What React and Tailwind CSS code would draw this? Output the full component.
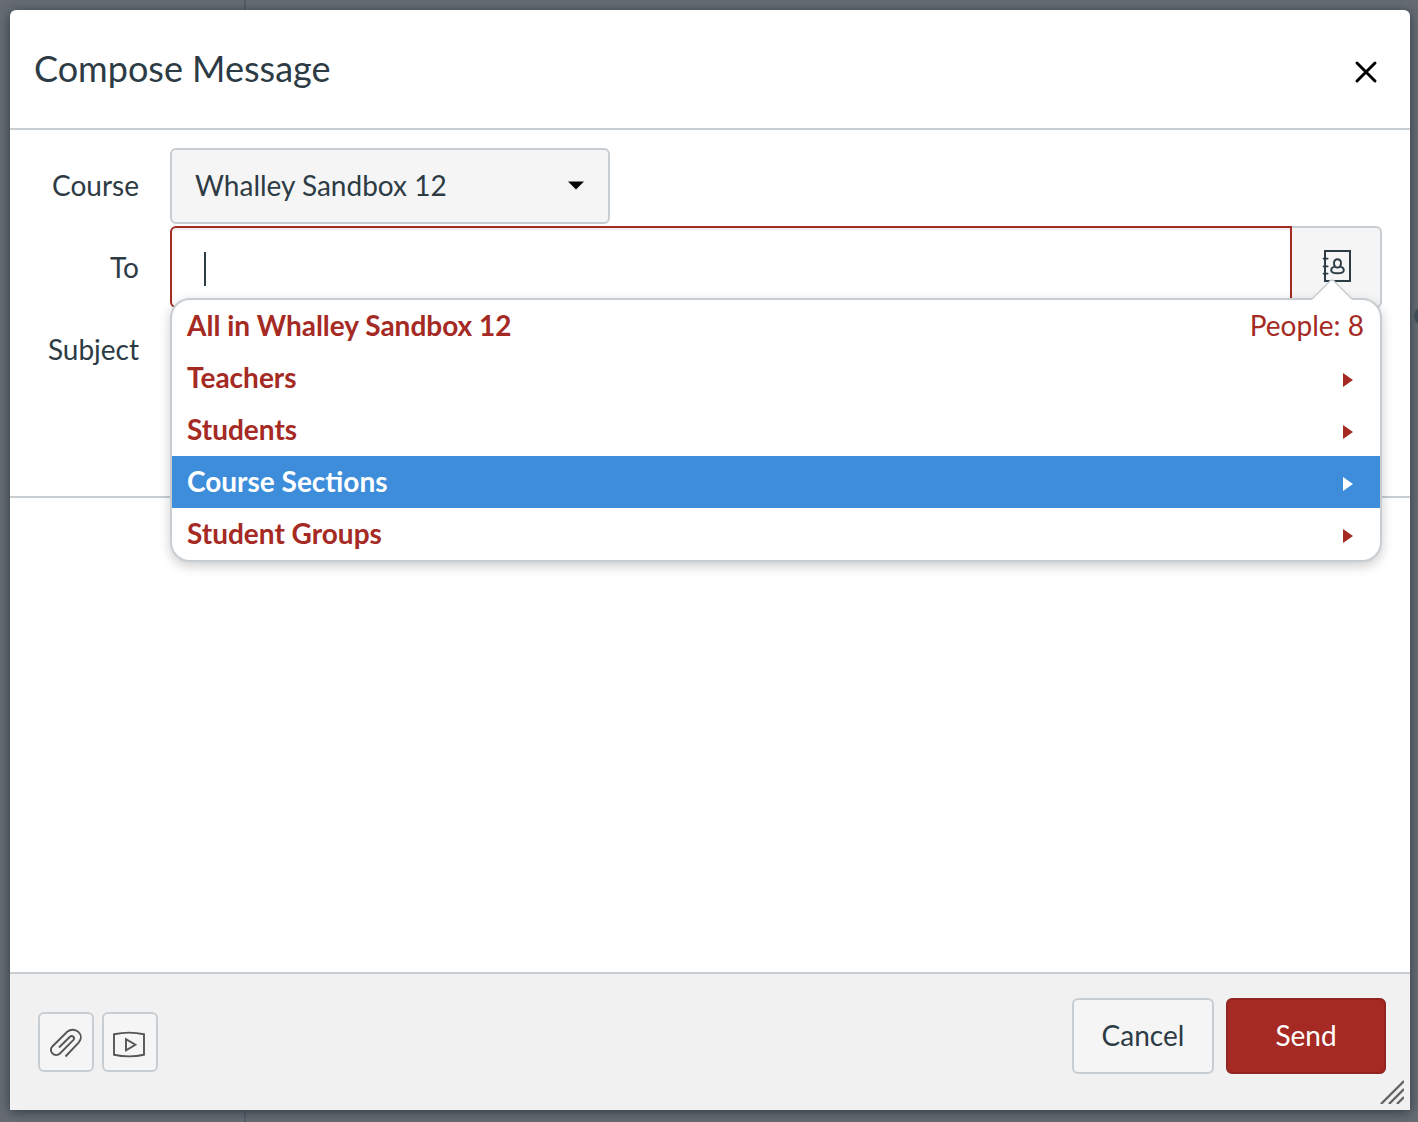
import React, { useState } from "react"

const recipients = [
  { name: "All in Whalley Sandbox 12", people: 8 },
  { name: "Teachers" },
  { name: "Students" },
  { name: "Course Sections" },
  { name: "Student Groups" },
]

const CloseIcon = () => (
  <svg width="24" height="24" viewBox="0 0 24 24" fill="none" stroke="currentColor" strokeWidth="3" strokeLinecap="round">
    <path d="M3 3L21 21M21 3L3 21" />
  </svg>
)

const AddressBookIcon = () => (
  <svg width="30" height="34" viewBox="0 0 30 34" fill="none" stroke="currentColor" strokeWidth="2">
    <path d="M4 2H29V32H4Z" />
    <path d="M2.6 9.6H6.6M2.6 17.4H6.6M2.6 24.6H6.6" strokeLinecap="round" strokeWidth="1.8" />
    <path d="M14.1 17.6C12.3 15.6 12.4 10.2 16.5 10.2S20.7 15.6 18.9 17.6C21.3 18 22.8 19.3 22.8 21.2C22.8 23.2 20.3 24.2 16.5 24.2S10.2 23.2 10.2 21.2C10.2 19.3 11.7 18 14.1 17.6C15.2 18.8 17.8 18.8 18.9 17.6" strokeWidth="1.9" />
  </svg>
)

const ClipIcon = () => (
  <svg width="34" height="32" viewBox="0 0 34 32" fill="none" stroke="currentColor" strokeWidth="1.9">
    <path d="M10 19.5L20.7 9C23.4 6.5 26.6 9.6 24.2 12.2L11.2 25.2C5.8 30.3 -1.4 23.4 3.6 18.2L18.2 3.8C25.6 -2.6 36.6 6.8 29.6 14.6L16.5 28.5" />
  </svg>
)

const MediaIcon = () => (
  <svg width="34" height="28" viewBox="0 0 34 28" fill="none" stroke="currentColor" strokeWidth="1.9">
    <path d="M1 4.2Q16 1 31 4.2V24.8Q16 28 1 24.8Z" />
    <path d="M13 9.1V20.3L22.4 14.7Z" />
  </svg>
)

const App = () => {
  const [to, setTo] = useState("")
  const [subject, setSubject] = useState("")
  const [body, setBody] = useState("")
  const [active, setActive] = useState(3)

  return (
    <div className="relative flex min-h-screen bg-[#666c72] pt-2.5 pr-2 pb-3 pl-2.5 font-['Lato',sans-serif] text-[28px] leading-9 text-[#2d3b45]">
      {/* Dimmed inbox behind the dialog */}
      <div className="absolute inset-0 flex overflow-hidden" aria-hidden="true">
        <div className="w-[246px] border-r-2 border-[#555e67]" />
        <div className="absolute top-[306px] -right-4 h-5 w-5 rounded-full bg-[#444f59]" />
      </div>

      <form
        role="dialog"
        aria-labelledby="compose-title"
        onSubmit={(e) => e.preventDefault()}
        className="relative flex flex-1 flex-col rounded-t-md bg-white shadow-[0_2px_12px_#2d3b45]"
      >
        {/* Header */}
        <header className="flex h-30 items-center justify-between border-b-2 border-[#c7cdd1] pr-8 pl-6">
          <h1 id="compose-title" className="pb-0.5 text-[36px] leading-10">Compose Message</h1>
          <button type="button" aria-label="Close" className="mt-1.5 text-black">
            <CloseIcon />
          </button>
        </header>

        {/* Message fields */}
        <div className="grid grid-cols-[129px_1fr] gap-x-[31px] border-b-2 border-[#c7cdd1] pt-[18px] pr-7 pb-[106px]">
          <label htmlFor="course" className="flex h-[78px] items-center justify-end pb-1">Course</label>
          <div className="relative h-[76px] w-[440px]">
            <select
              id="course"
              className="h-full w-full appearance-none rounded-md border-2 border-[#c7cdd1] bg-[#f5f5f5] pb-0.5 pl-[23px]"
            >
              <option>Whalley Sandbox 12</option>
            </select>
            <svg className="pointer-events-none absolute top-[33px] right-[26px]" width="16" height="9" viewBox="0 0 16 9">
              <path d="M0 0.5H16L8 8.5Z" fill="#000" />
            </svg>
          </div>

          <label htmlFor="to" className="flex h-[82px] items-center justify-end">To</label>
          <div className="relative flex h-[82px]">
            <div className="flex flex-1 items-center rounded-l-md border-2 border-[#a52a24] pt-1 pl-8 shadow-[inset_0_2px_2px_#ececec]">
              <span className="h-[34px] w-0.5 bg-[#2d3b45]" />
              <input
                id="to"
                value={to}
                onChange={(e) => setTo(e.target.value)}
                className="h-full w-full caret-transparent outline-none"
              />
            </div>
            <button
              type="button"
              aria-label="Address book"
              className="flex w-[90px] justify-center rounded-r-md border-2 border-l-0 border-[#c7cdd1] bg-[#f5f5f5] pt-[21px]"
            >
              <AddressBookIcon />
            </button>

            {/* Recipient menu */}
            <div className="absolute inset-x-0 top-[72px] z-10 rounded-[20px] border-2 border-[#c7cdd1] bg-white shadow-[0_4px_12px_rgba(0,0,0,0.2)]">
              <svg className="absolute -top-[21px] right-[27px]" width="42" height="22" viewBox="0 0 42 22">
                <path d="M1 20L19.5 1.5Q21 0.5 22.5 1.5L41 20V22H1Z" fill="#fff" />
                <path d="M1 20L19.5 1.5Q21 0.5 22.5 1.5L41 20" fill="none" stroke="#c7cdd1" strokeWidth="1.5" />
              </svg>
              <ul className="overflow-hidden rounded-[18px]">
                {recipients.map((item, i) => (
                  <li key={item.name}>
                    <button
                      type="button"
                      onMouseEnter={() => setActive(i)}
                      className={`flex h-13 w-full items-center justify-between pl-[15px] ${
                        active === i ? "bg-[#3d8ddb] text-white" : "text-[#a52a24]"
                      }`}
                    >
                      <span className="pb-0.5 font-bold">{item.name}</span>
                      {item.people ? (
                        <span className="pr-4 pb-0.5">People: {item.people}</span>
                      ) : (
                        <svg className="mt-1 mr-[27px]" width="10" height="14" viewBox="0 0 10 14" fill="currentColor">
                          <path d="M0 0L10 7L0 14Z" />
                        </svg>
                      )}
                    </button>
                  </li>
                ))}
              </ul>
            </div>
          </div>

          <label htmlFor="subject" className="flex h-[82px] items-center justify-end">Subject</label>
          <input
            id="subject"
            value={subject}
            onChange={(e) => setSubject(e.target.value)}
            className="my-1 rounded-md border-2 border-[#c7cdd1] px-6 outline-none"
          />
        </div>

        <textarea
          aria-label="Message"
          value={body}
          onChange={(e) => setBody(e.target.value)}
          className="w-full flex-1 resize-none p-6 outline-none"
        />

        {/* Footer */}
        <footer className="relative flex h-[138px] items-start justify-between border-t-2 border-[#c7cdd1] bg-[#f1f1f1] pt-6 pr-6 pl-7">
          <div className="mt-3.5 flex gap-2 text-[#555]">
            <button
              type="button"
              aria-label="Attach file"
              className="flex h-15 w-14 items-center justify-center rounded-md border-2 border-[#c7cdd1] bg-[#f5f5f5] pt-1"
            >
              <ClipIcon />
            </button>
            <button
              type="button"
              aria-label="Record media"
              className="flex h-15 w-14 items-center justify-center rounded-md border-2 border-[#c7cdd1] bg-[#f5f5f5] pt-1"
            >
              <MediaIcon />
            </button>
          </div>
          <div className="flex gap-3">
            <button type="button" className="h-19 w-[142px] rounded-md border-2 border-[#c7cdd1] bg-[#f5f5f5] pb-0.5">
              Cancel
            </button>
            <button type="submit" className="h-19 w-40 rounded-md border-2 border-[#91251f] bg-[#a52a24] pb-0.5 text-white">
              Send
            </button>
          </div>
          <svg className="absolute right-1.5 bottom-1.5" width="24" height="24" viewBox="0 0 24 24" stroke="#666" strokeWidth="2.4">
            <path d="M1 24L24 1M9 24L24 9M17 24L24 17" />
          </svg>
        </footer>
      </form>
    </div>
  )
}

export default App
